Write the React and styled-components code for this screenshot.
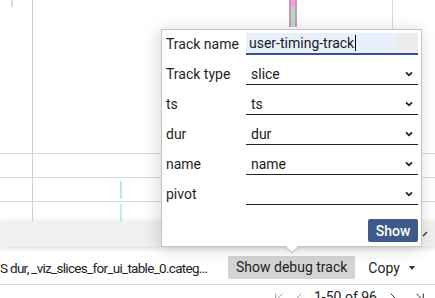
import React from 'react';
import styled, { createGlobalStyle } from 'styled-components';
import { ChevronFirst, ChevronLeft, ChevronRight, ChevronLast } from 'lucide-react';

const Global = createGlobalStyle`
  html, body { margin: 0; padding: 0; background: #fff; }
  body {
    font-family: Roboto, "Liberation Sans", sans-serif;
    font-size: 14px;
    color: #222;
    overflow: hidden;
  }
  #root { width: 435px; height: 298px; overflow: hidden; }
`;

const Page = styled.div`
  position: relative;
  width: 435px;
  height: 298px;
  overflow: hidden;
  display: flex;
  flex-direction: column;
`;

const Timeline = styled.div`
  position: relative;
  display: flex;
  flex-direction: column;
  flex: none;
`;

const Track = styled.div`
  height: ${(p) => p.$h}px;
  box-sizing: border-box;
  border-bottom: ${(p) => (p.$last ? 'none' : '1px solid #d9d9d9')};
`;

const Canvas = styled.svg`
  position: absolute;
  left: 0;
  top: 0;
  pointer-events: none;
`;

const Handle = styled.div`
  position: relative;
  z-index: 1;
  height: 26px;
  flex: none;
  background: #f0f0f0;
  box-shadow: 0 1px 5px rgba(0, 0, 0, 0.16);
  display: flex;
  justify-content: flex-end;
  align-items: center;
  padding-right: 7px;
`;

const Toolbar = styled.div`
  height: 38px;
  box-sizing: border-box;
  flex: none;
  padding-top: 4px;
  border-bottom: 1px solid #dcdcdc;
  display: flex;
  align-items: center;
  white-space: nowrap;
`;

const QueryText = styled.span`
  flex: none;
  width: 216px;
  margin-right: 12px;
  overflow: hidden;
  white-space: nowrap;
  font-size: 13.5px;
  letter-spacing: -0.7px;
  color: #222;
`;

const GrayButton = styled.div`
  height: 23px;
  line-height: 23px;
  padding: 0 8px;
  background: #d4d4d4;
  border-radius: 2px;
  color: #1e1e1e;
`;

const MenuButton = styled.div`
  margin-left: 5px;
  height: 23px;
  padding: 0 8px;
  display: flex;
  align-items: center;
  gap: 9px;
  color: #1e1e1e;
`;

const Caret = styled.span`
  width: 0;
  height: 0;
  border-left: 3.5px solid transparent;
  border-right: 3.5px solid transparent;
  border-top: 4px solid #333;
`;

const Pager = styled.div`
  display: flex;
  justify-content: flex-end;
  align-items: flex-start;
  padding: 2px 7px 0 0;
  line-height: 20px;
`;

const PagerIcon = styled.span`
  display: flex;
  margin-left: ${(p) => p.$ml || 0}px;
  margin-top: 3px;
  color: ${(p) => (p.$dim ? '#9a9a9a' : '#333')};
`;

const PagerLabel = styled.span`
  margin-left: 7px;
  color: #222;
`;

const Popup = styled.div`
  position: absolute;
  left: 161px;
  top: 29px;
  width: 261px;
  box-sizing: border-box;
  background: #fff;
  border: 1px solid #c6c6c6;
  padding: 3px 3px 4px 4px;
  box-shadow: -2px 2px 16px rgba(0, 0, 0, 0.17);
  z-index: 5;

  &::before,
  &::after {
    content: '';
    position: absolute;
    left: 50%;
    width: 0;
    height: 0;
  }
  &::before {
    top: calc(100% + 1px);
    margin-left: -7px;
    border-left: 7px solid transparent;
    border-right: 7px solid transparent;
    border-top: 7px solid #c6c6c6;
  }
  &::after {
    top: 100%;
    margin-left: -6px;
    border-left: 6px solid transparent;
    border-right: 6px solid transparent;
    border-top: 6px solid #fff;
  }
`;

const Form = styled.div`
  display: grid;
  grid-template-columns: 80px 172px;
  grid-auto-rows: 22px;
  row-gap: 8px;
  align-items: center;
`;

const Label = styled.span`
  font-size: 14px;
  color: #1f1f1f;
  white-space: nowrap;
`;

const TextField = styled.div`
  height: 22px;
  box-sizing: border-box;
  padding-left: 3px;
  display: flex;
  align-items: center;
  background: linear-gradient(to right, #e8f0fe 0, #e8f0fe 151px, #ececec 151px);
  border-bottom: 2px solid #34548a;
  color: #1a1a1a;
`;

const TextCaret = styled.span`
  display: inline-block;
  width: 1px;
  height: 16px;
  background: #000;
  margin-left: 1px;
`;

const SelectBox = styled.div`
  height: 22px;
  box-sizing: border-box;
  padding: 0 5px;
  display: flex;
  align-items: center;
  justify-content: space-between;
  border-bottom: 1px solid #222;
  color: #1a1a1a;
`;

const Actions = styled.div`
  display: flex;
  justify-content: flex-end;
  margin-top: 14px;
`;

const PrimaryButton = styled.button`
  width: 50px;
  height: 23px;
  border: none;
  border-radius: 2px;
  background: #3e5a8a;
  color: #fff;
  font-family: Roboto, "Liberation Sans", sans-serif;
  font-size: 14px;
  font-weight: 500;
  padding: 0;
`;

function Chevron() {
  return (
    <svg width="8" height="6" viewBox="0 0 8 6">
      <path d="M1 1.3 L4 4.3 L7 1.3" fill="none" stroke="#222" strokeWidth="1.8" />
    </svg>
  );
}

const selects = [
  { label: 'Track type', value: 'slice' },
  { label: 'ts', value: 'ts' },
  { label: 'dur', value: 'dur' },
  { label: 'name', value: 'name' },
  { label: 'pivot', value: '' },
];

export default function App() {
  return (
    <Page>
      <Global />
      <Timeline>
        <Track $h={154} />
        <Track $h={24} />
        <Track $h={24} />
        <Track $h={19} $last />
        <Canvas width="435" height="221" viewBox="0 0 435 221">
          <rect x="32" y="0" width="1" height="221" fill="#d0d0d0" />
          <rect x="392" y="0" width="1" height="221" fill="#d6d6d6" />
          <rect x="11" y="0" width="2" height="7" fill="#efcdef" />
          <rect x="289" y="0" width="2" height="27" fill="#e08cc4" />
          <rect x="291" y="0" width="4" height="7" fill="#e9a6d2" />
          <rect x="291" y="7" width="4" height="20" fill="#a6e4bd" />
          <rect x="295" y="0" width="2" height="27" fill="#e08cc4" />
          <rect x="120" y="181" width="2" height="18" fill="#c3e6e1" />
          <rect x="120" y="204" width="2" height="17" fill="#c6ecdf" />
        </Canvas>
      </Timeline>
      <Handle>
        <svg width="6" height="6" viewBox="0 0 6 6">
          <path d="M1 5 L5 1" stroke="#333" strokeWidth="1.4" />
        </svg>
      </Handle>
      <Toolbar>
        <QueryText>S dur, _viz_slices_for_ui_table_0.categ…</QueryText>
        <GrayButton>Show debug track</GrayButton>
        <MenuButton>
          Copy
          <Caret />
        </MenuButton>
      </Toolbar>
      <Pager>
        <PagerIcon $dim>
          <ChevronFirst size={16} strokeWidth={1.5} />
        </PagerIcon>
        <PagerIcon $dim $ml={4}>
          <ChevronLeft size={16} strokeWidth={1.5} />
        </PagerIcon>
        <PagerLabel>1-50 of 96</PagerLabel>
        <PagerIcon $ml={8}>
          <ChevronRight size={16} strokeWidth={1.5} />
        </PagerIcon>
        <PagerIcon $ml={11}>
          <ChevronLast size={16} strokeWidth={1.5} />
        </PagerIcon>
      </Pager>

      <Popup>
        <Form>
          <Label>Track name</Label>
          <TextField>
            user-timing-track
            <TextCaret />
          </TextField>
          {selects.map((s) => (
            <React.Fragment key={s.label}>
              <Label>{s.label}</Label>
              <SelectBox>
                <span>{s.value}</span>
                <Chevron />
              </SelectBox>
            </React.Fragment>
          ))}
        </Form>
        <Actions>
          <PrimaryButton>Show</PrimaryButton>
        </Actions>
      </Popup>
    </Page>
  );
}
